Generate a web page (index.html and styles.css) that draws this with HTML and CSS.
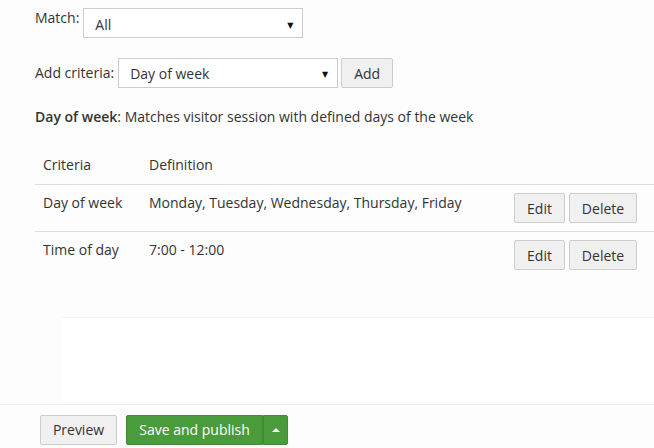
FILE: index.html
```html
<!DOCTYPE html>
<html>
<head>
<meta charset="utf-8">
<link rel="stylesheet" href="styles.css">
</head>
<body>
<div class="page">
  <div class="content">
    <div class="field field-match">
      <label class="lbl">Match:</label>
      <div class="select select-match"><span>All</span><span class="caret">▼</span></div>
    </div>
    <div class="field field-add">
      <label class="lbl">Add criteria:</label>
      <div class="select select-add"><span>Day of week</span><span class="caret">▼</span></div>
      <button class="btn btn-add">Add</button>
    </div>
    <p class="desc"><b>Day of week</b>: Matches visitor session with defined days of the week</p>
    <div class="grid">
      <div class="row head">
        <div class="c1">Criteria</div><div class="c2">Definition</div><div class="c3"></div>
      </div>
      <div class="row">
        <div class="c1">Day of week</div>
        <div class="c2">Monday, Tuesday, Wednesday, Thursday, Friday</div>
        <div class="c3"><button class="btn btn-edit">Edit</button><button class="btn btn-del">Delete</button></div>
      </div>
      <div class="row">
        <div class="c1">Time of day</div>
        <div class="c2">7:00 - 12:00</div>
        <div class="c3"><button class="btn btn-edit">Edit</button><button class="btn btn-del">Delete</button></div>
      </div>
    </div>
    <div class="spacer"></div>
  </div>
  <div class="footer">
    <button class="btn btn-preview">Preview</button>
    <div class="split">
      <button class="btn-green main">Save and publish</button>
      <button class="btn-green toggle"><span class="up"></span></button>
    </div>
  </div>
</div>
</body>
</html>
```
FILE: styles.css
```css
* { box-sizing: border-box; }
html, body { margin: 0; padding: 0; }
body {
  background: #fdfdfd;
  font-family: "Open Sans", "DejaVu Sans", sans-serif;
  font-size: 14px;
  color: #333;
  width: 654px;
  height: 448px;
  overflow: hidden;
}
.page { display: flex; flex-direction: column; height: 448px; }
.content { padding-left: 35px; height: 404px; }
.field { display: flex; align-items: flex-start; }
.field-match { padding-top: 8px; }
.field-add { margin-top: 20px; }
.lbl { margin-right: 4px; }
.field-match .lbl { line-height: 20px; }
.field-add .lbl { line-height: 30px; }
.select {
  display: flex; justify-content: space-between; align-items: center;
  height: 30px; border: 1px solid #ccc; background: #fff;
  padding: 0 9px 0 11px; font-size: 14px; color: #333;
}
.select-match { width: 220px; padding-top: 3px; }
.select-add { width: 220px; }
.caret { font-size: 8px; color: #111; }
.btn {
  font-family: inherit; font-size: 14px; color: #333;
  background: #f1f0f1; border: 1px solid #ccc; border-radius: 2px;
  height: 30px; padding: 0; cursor: pointer;
}
.btn-add { margin-left: 3px; width: 52px; }
.desc { margin: 19px 0 0; line-height: 20px; }
.desc b { font-weight: 600; }
.grid { width: 619px; }
.row { display: grid; grid-template-columns: 114px 1fr auto; height: 47px; border-top: 1px solid #ddd; padding-top: 8px; line-height: 20px; }
.row > .c1 { padding-left: 8px; }
.row.head { border-top: none; height: 57px; padding-top: 28px; }
.row .c3 { display: flex; padding-right: 17px; }
.btn-edit { width: 51px; margin-right: 4px; }
.btn-del { width: 68px; }
.spacer { margin-top: 39px; margin-left: 27px; border-top: 1px solid #f2f2f2; height: 86px; background: #fff; }
.footer { border-top: 1px solid #eee; height: 44px; display: flex; align-items: flex-start; padding: 10px 0 0 40px; }
.btn-preview { width: 77px; margin-right: 9px; line-height: 26px; }
.split { display: flex; }
.btn-green {
  font-family: inherit; font-size: 14px; color: #fff;
  background: #4a9b3c; border: 1px solid #3f8c33; height: 30px; padding: 0; line-height: 26px;
}
.btn-green.main { width: 137px; border-radius: 2px 0 0 2px; }
.btn-green.toggle { width: 25px; border-left: 1px solid #3f8c33; border-radius: 0 2px 2px 0; display: flex; align-items: center; justify-content: center; }
.up { width: 0; height: 0; border-left: 4px solid transparent; border-right: 4px solid transparent; border-bottom: 4px solid #fff; }
```
